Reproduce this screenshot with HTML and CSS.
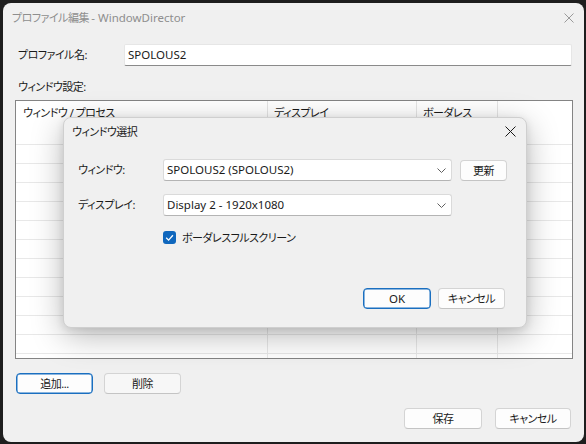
FILE: index.html
```html
<!DOCTYPE html>
<html lang="ja">
<head>
<meta charset="utf-8">
<title>プロファイル編集 - WindowDirector</title>
<link rel="stylesheet" href="styles.css">
</head>
<body>
<div class="window">
  <div class="titlebar">
    <span class="title">プロファイル編集 <span class="latin">- WindowDirector</span></span>
    <svg class="close close-inactive" width="10" height="10" viewBox="0 0 10 10"><path d="M0.5 0.5L9.5 9.5M9.5 0.5L0.5 9.5"/></svg>
  </div>

  <div class="content">
    <div class="profile-row">
      <span class="label">プロファイル名:</span>
      <div class="textbox latin">SPOLOUS2</div>
    </div>

    <div class="section-label">ウィンドウ設定:</div>

    <div class="listview">
      <div class="lv-header">
        <div class="lv-col">ウィンドウ / プロセス</div>
        <div class="lv-col">ディスプレイ</div>
        <div class="lv-col">ボーダレス</div>
        <div class="lv-col lv-last"></div>
      </div>
      <div class="lv-rows">
        <div class="lv-row"><div></div><div></div><div></div><div></div></div>
        <div class="lv-row"><div></div><div></div><div></div><div></div></div>
        <div class="lv-row"><div></div><div></div><div></div><div></div></div>
        <div class="lv-row"><div></div><div></div><div></div><div></div></div>
        <div class="lv-row"><div></div><div></div><div></div><div></div></div>
        <div class="lv-row"><div></div><div></div><div></div><div></div></div>
        <div class="lv-row"><div></div><div></div><div></div><div></div></div>
        <div class="lv-row"><div></div><div></div><div></div><div></div></div>
        <div class="lv-row"><div></div><div></div><div></div><div></div></div>
        <div class="lv-row"><div></div><div></div><div></div><div></div></div>
        <div class="lv-row"><div></div><div></div><div></div><div></div></div>
        <div class="lv-row"><div></div><div></div><div></div><div></div></div>
        <div class="lv-row"><div></div><div></div><div></div><div></div></div>
      </div>
    </div>

    <div class="action-row">
      <button class="btn btn-default btn-add">追加...</button>
      <button class="btn btn-del">削除</button>
    </div>

    <div class="footer">
      <button class="btn btn-save">保存</button>
      <button class="btn btn-cancel">キャンセル</button>
    </div>
  </div>

  <!-- modal window picker -->
  <div class="dialog">
    <div class="dlg-titlebar">
      <span class="dlg-title">ウィンドウ選択</span>
      <svg class="close" width="11" height="11" viewBox="0 0 11 11"><path d="M0.5 0.5L10.5 10.5M10.5 0.5L0.5 10.5"/></svg>
    </div>
    <div class="dlg-body">
      <div class="form-row">
        <span class="dlg-label">ウィンドウ:</span>
        <div class="combo">
          <span class="latin">SPOLOUS2 (SPOLOUS2)</span>
          <svg class="chev" width="9" height="5" viewBox="0 0 9 5"><polyline points="0.5,0.5 4.5,4.5 8.5,0.5"/></svg>
        </div>
        <button class="btn btn-refresh">更新</button>
      </div>
      <div class="form-row row-display">
        <span class="dlg-label">ディスプレイ:</span>
        <div class="combo">
          <span class="latin">Display 2 - 1920x1080</span>
          <svg class="chev" width="9" height="5" viewBox="0 0 9 5"><polyline points="0.5,0.5 4.5,4.5 8.5,0.5"/></svg>
        </div>
      </div>
      <div class="check-row">
        <span class="checkbox"><svg width="13" height="13" viewBox="0 0 13 13"><polyline points="3.2,6.8 5.6,9.1 9.9,4.3"/></svg></span>
        <span class="check-label">ボーダレスフルスクリーン</span>
      </div>
    </div>
    <div class="dlg-footer">
      <button class="btn btn-default btn-ok latin">OK</button>
      <button class="btn btn-dcancel">キャンセル</button>
    </div>
  </div>
</div>
</body>
</html>
```

FILE: styles.css
```css
* { box-sizing: border-box; }

html, body {
  margin: 0;
  height: 100%;
  background: #1e1e1e;
  overflow: hidden;
}

body {
  padding: 3px 0 0 3px;
  font-family: "Noto Sans", "Noto Sans CJK JP", sans-serif;
  font-size: 11px;
  font-feature-settings: "palt";
  letter-spacing: -0.5px;
  color: #1a1a1a;
}

/* Latin runs keep natural spacing; only kana/kanji are tightened */
.latin { letter-spacing: 0; font-size: 11.5px; }

.window {
  position: relative;
  width: 581px;
  height: 439px;
  background: #f0f0f0;
  border-radius: 8px;
  overflow: hidden;
}

.titlebar {
  height: 29px;
  display: flex;
  align-items: center;
  justify-content: space-between;
  padding: 0 10px 0 9px;
}

.title {
  color: #8e8e8e;
  line-height: 16px;
}

.close path { stroke: #1a1a1a; stroke-width: 1; fill: none; }
.close-inactive path { stroke: #9a9a9a; }

.content {
  padding: 0 11px 0 12px;
}

.profile-row {
  margin-top: 12px;
  height: 22px;
  display: flex;
  align-items: center;
}

.label {
  width: 109px;
  padding-left: 3px;
  line-height: 16px;
}

.textbox {
  width: 448px;
  height: 22px;
  background: #fff;
  border: 1px solid #e6e6e6;
  border-bottom-color: #8a8a8a;
  border-radius: 2px;
  padding: 0 3px;
  line-height: 20px;
}

.section-label {
  margin-top: 13px;
  padding-left: 3px;
  line-height: 16px;
  margin-bottom: 5px;
}

.listview {
  width: 558px;
  height: 259px;
  background: #fff;
  border: 1px solid #848484;
  overflow: hidden;
}

.lv-header {
  display: grid;
  grid-template-columns: 252px 149px 81px 1fr;
  height: 25px;
}

.lv-col {
  border-right: 1px solid #e5e5e5;
  padding: 0 0 0 6px;
  line-height: 24px;
}
.lv-col:first-child { padding-left: 7px; }
.lv-last { border-right: none; }

.lv-row {
  display: grid;
  grid-template-columns: 252px 149px 81px 1fr;
  height: 19px;
  border-bottom: 1px solid #e8e8e8;
}
.lv-row > div { border-right: 1px solid #e8e8e8; }
.lv-row > div:last-child { border-right: none; }

.btn {
  font: inherit;
  font-feature-settings: "palt";
  letter-spacing: inherit;
  color: #1a1a1a;
  height: 21px;
  padding: 0;
  background: #fdfdfd;
  border: 1px solid #d4d4d4;
  border-bottom-color: #c4c4c4;
  border-radius: 4px;
  line-height: 19px;
  text-align: center;
}
.btn.latin { letter-spacing: 0; font-size: 11.5px; }

.btn-default {
  border: 1px solid #1a6fc0;
  box-shadow: inset 0 0 0 0.5px #1a6fc0;
}

.action-row {
  margin-top: 14px;
  display: flex;
  padding-left: 1px;
  gap: 11px;
}
.btn-add, .btn-del { width: 77px; }
.btn-del { background: #f7f7f7; }

.footer {
  margin-top: 14px;
  display: flex;
  justify-content: flex-end;
  gap: 13px;
  padding-right: 2px;
}
.btn-save { width: 78px; }
.btn-cancel { width: 76px; }

/* modal dialog */
.dialog {
  position: absolute;
  left: 60px;
  top: 114px;
  width: 464px;
  height: 211px;
  background: #f0f0f0;
  border: 1px solid #cfcfcf;
  border-radius: 8px;
  box-shadow: 0 8px 32px rgba(0, 0, 0, 0.28), 0 2px 8px rgba(0, 0, 0, 0.10);
  display: flex;
  flex-direction: column;
}

.dlg-titlebar {
  height: 27px;
  display: flex;
  align-items: center;
  justify-content: space-between;
  padding: 0 10px 0 8px;
}
.dlg-title { line-height: 16px; }

.dlg-body {
  padding-left: 14px;
  margin-top: 14px;
}

.form-row {
  display: flex;
  align-items: center;
  height: 22px;
}
.row-display { margin-top: 13px; }

.dlg-label {
  width: 85px;
  line-height: 16px;
}

.combo {
  width: 289px;
  height: 22px;
  background: #fff;
  border: 1px solid #dadada;
  border-bottom-color: #b4b4b4;
  border-radius: 3px;
  display: flex;
  align-items: center;
  justify-content: space-between;
  padding: 0 5px 0 3px;
  line-height: 20px;
}

.chev polyline { stroke: #606060; stroke-width: 1; fill: none; }

.btn-refresh {
  width: 47px;
  margin-left: 8px;
}

.check-row {
  margin-top: 15px;
  padding-left: 85px;
  display: flex;
  align-items: center;
  height: 13px;
}

.checkbox {
  width: 13px;
  height: 13px;
  border-radius: 3px;
  background: #0f67bd;
  display: block;
}
.checkbox svg { display: block; }
.checkbox polyline { stroke: #fff; stroke-width: 1.3; fill: none; }

.check-label {
  margin-left: 6px;
  line-height: 16px;
}

.dlg-footer {
  margin-top: 44px;
  display: flex;
  justify-content: flex-end;
  gap: 7px;
  padding-right: 21px;
}
.btn-ok { width: 68px; }
.btn-dcancel { width: 67px; }
```
